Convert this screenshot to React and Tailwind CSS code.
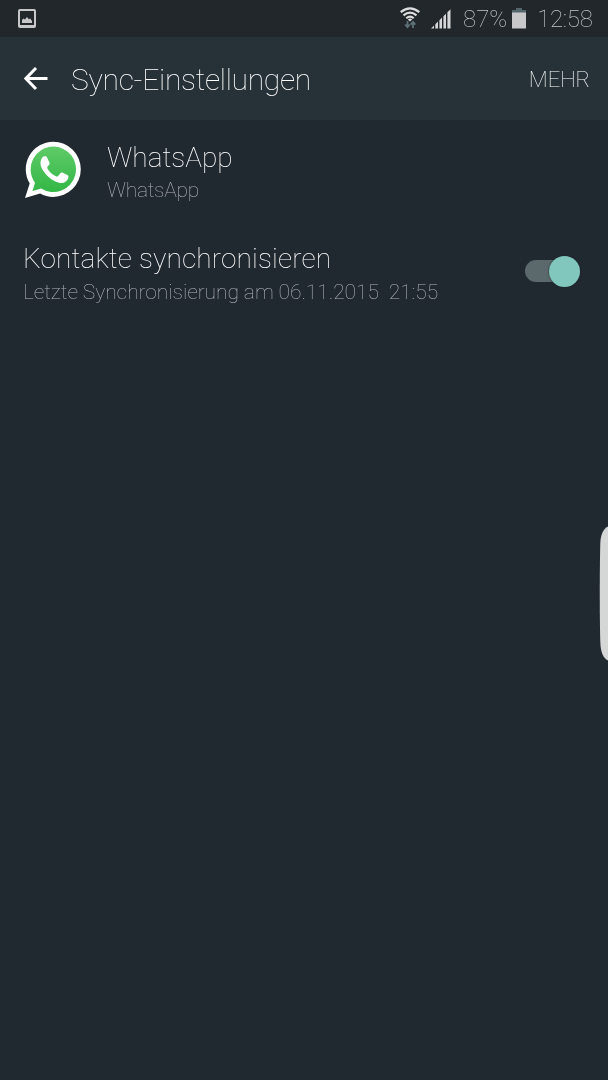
import { useState } from "react";

function PictureIcon() {
  return (
    <svg width="18" height="19" viewBox="0 0 18 19" className="block">
      <path fill="#c8c8ca" fillRule="evenodd" d="M2 0h14a2 2 0 0 1 2 2v15a2 2 0 0 1-2 2H2a2 2 0 0 1-2-2V2a2 2 0 0 1 2-2Zm0 2v14h14V2Z" />
      <path fill="#c8c8ca" d="M4 14v-3l1.500-1.500L7 10.500 9 8l2 2.500 1-1.200L14 12v2Z" />
    </svg>
  );
}

function WifiIcon() {
  return (
    <svg width="20" height="22" viewBox="0 0 20 22" className="block">
      <g fill="none" stroke="#dcdddd" strokeWidth="2.200">
        <path d="M.7 5.200Q10-2.600 19.300 5.200" />
        <path d="M3.500 8.300Q10 2.900 16.500 8.300" />
        <path d="M6.300 11.300Q10 8 13.700 11.300" />
      </g>
      <path fill="#dcdddd" d="M7.800 12.400q2.200-1.600 4.400 0L10 14.600Z" />
      <path fill="none" stroke="#5d7177" strokeWidth="1.800" d="M7.500 14v6M5.200 17.500l2.300 2.700 2.300-2.700M13 21v-6M10.700 17.600l2.300-2.700 2.300 2.700" />
    </svg>
  );
}

function SignalIcon() {
  return (
    <svg width="20" height="20" viewBox="0 0 20 20" className="block" fill="#d5d6d7">
      <path d="M0 19.500l3-3v3ZM4.300 19.500v-4.300l2.700-2.700v7ZM8.400 19.500v-8.300l2.600-2.600v10.900ZM12.400 19.500V7.300L15 4.700v14.800ZM16.400 19.500V3.300L19.500.2v19.300Z" />
    </svg>
  );
}

function BatteryIcon() {
  return (
    <svg width="14" height="21" viewBox="0 0 14 21" className="block">
      <path fill="#53666b" d="M4 0h6v2h4v3H0V2h4Z" />
      <path fill="#c8c8ca" d="M0 4.500h14V20.500H0Z" />
    </svg>
  );
}

function BackIcon() {
  return (
    <svg width="24" height="24" viewBox="0 0 24 24" className="block" fill="none" stroke="#fff" strokeWidth="3">
      <path d="M23.500 11.500H2.500M12 1 1.900 11.500 12 22" />
    </svg>
  );
}

function WhatsAppIcon() {
  return (
    <svg width="58" height="58" viewBox="0 0 58 58" className="block">
      <defs>
        <linearGradient id="bubble" x1="0" y1="0" x2="0" y2="1">
          <stop offset="0" stopColor="#5fcb68" />
          <stop offset="1" stopColor="#33b746" />
        </linearGradient>
      </defs>
      <path fill="#fff" d="M29.200.700A27.600 27.600 0 0 1 29.200 55.900C24.500 55.900 20 54.700 16.100 52.500L1 56.900 5.700 42.500A27.600 27.600 0 0 1 29.200.700Z" />
      <path fill="url(#bubble)" d="M29.200 5.500A22.800 22.800 0 1 1 17.100 47.600L8.500 50 11 41.700A22.800 22.800 0 0 1 29.200 5.500Z" />
      <path fill="#fff" transform="translate(-.8 -1)" d="M20.200 16.600c1.400-.5 3-.5 3.700.8l2.400 5.400c.4 1.200-.8 2.800-2.100 4.200-.4.500-.3 1 0 1.500 2.100 3.600 5 6.200 9 7.900.8.300 1.200.2 1.700-.4l2.400-3c.5-.6 1-.7 1.800-.4l5.500 2.700c.8.500.8 1.200.5 2.400-.8 3.200-3.700 5.300-7 5.400-3.300 0-9.100-2.500-13.500-6.800-3.900-3.900-7.200-8.900-7.300-12.600-.1-3.200 1.300-6 2.900-7.100Z" />
    </svg>
  );
}

function StatusBar() {
  return (
    <div className="flex h-[37px] items-start justify-between bg-[#21272b] pl-[18px] pr-4">
      <div className="pt-[9px]">
        <PictureIcon />
      </div>
      <div className="flex items-start text-[24px] leading-[28px] text-[#c4c7c9] will-change-transform">
        <div className="mr-[11px] pt-[7px]">
          <WifiIcon />
        </div>
        <div className="mr-[12px] pt-[9px]">
          <SignalIcon />
        </div>
        <span className="mr-[5px] pt-[5px]">87%</span>
        <div className="mr-[11px] pt-[8px]">
          <BatteryIcon />
        </div>
        <span className="pt-[5px] tracking-[-0.3px]">12:58</span>
      </div>
    </div>
  );
}

function ActionBar() {
  return (
    <header className="h-[83px] bg-[#273238]">
      <div className="flex h-full items-center pl-6 pr-[18px] will-change-transform">
        <button type="button" aria-label="Zurück">
          <BackIcon />
        </button>
        <h1 className="ml-[23px] pt-[2px] text-[30px] leading-9 tracking-[-0.28px] text-white">Sync-Einstellungen</h1>
        <button type="button" className="ml-auto pt-[2px] text-[22px] leading-7 text-white">
          MEHR
        </button>
      </div>
    </header>
  );
}

function Switch({ checked, onChange }) {
  return (
    <button
      type="button"
      role="switch"
      aria-checked={checked}
      onClick={() => onChange(!checked)}
      className={`mt-px flex h-[22px] w-[55px] items-center rounded-full bg-[#5b686c] ${checked ? "justify-end" : "justify-start"}`}
    >
      <span className="size-[31px] shrink-0 rounded-full bg-[#81c7bd] shadow-[0_0_2px_#1a2025]" />
    </button>
  );
}

export default function App() {
  const [sync, setSync] = useState(true);

  return (
    <div className="relative h-[1080px] w-[608px] overflow-hidden bg-[#212930] font-['Roboto',sans-serif] font-thin">
      <StatusBar />
      <ActionBar />

      <div className="flex h-[100px] items-center pl-6 will-change-transform">
        <WhatsAppIcon />
        <div className="ml-[25px] pt-[4px]">
          <div className="text-[28px] leading-9 text-white">WhatsApp</div>
          <div className="text-[21px] leading-[29px] tracking-[-0.3px] text-[#b0b4b6]">WhatsApp</div>
        </div>
      </div>

      <div className="flex h-[101px] items-center justify-between pl-[23px] pr-7 will-change-transform">
        <div className="pt-[6px]">
          <div className="text-[28px] leading-9 tracking-[0.14px] text-white">Kontakte synchronisieren</div>
          <div className="whitespace-pre text-[21px] leading-[30px] tracking-[-0.07px] text-[#b0b4b6]">Letzte Synchronisierung am 06.11.2015  21:55</div>
        </div>
        <Switch checked={sync} onChange={setSync} />
      </div>

      {/* Edge panel handle */}
      <svg width="9" height="135" viewBox="0 0 9 135" className="absolute right-0 top-[526px]">
        <path fill="#d5d6d6" d="M9 .5C4 3 1.600 9 1.300 17 .6 45 .6 90 1.300 116 1.600 126 4 132 9 134.500Z" />
      </svg>
    </div>
  );
}
